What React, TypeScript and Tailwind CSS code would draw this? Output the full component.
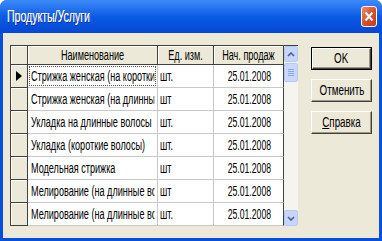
import type { ReactNode } from 'react'

const rows = [
  { name: 'Стрижка женская (на короткие волосы)', unit: 'шт.' },
  { name: 'Стрижка женская (на длинные волосы)', unit: 'шт' },
  { name: 'Укладка на длинные волосы', unit: 'шт.' },
  { name: 'Укладка (короткие волосы)', unit: 'шт.' },
  { name: 'Модельная стрижка', unit: 'шт' },
  { name: 'Мелирование (на длинные волосы)', unit: 'шт' },
  { name: 'Мелирование (на длинные воолосы)', unit: 'шт.' },
]

const font = { fontFamily: '"Liberation Sans", Arial, sans-serif' }

// the old XP dialog font is tall and narrow, so squeeze it
function L({ children }: { children: ReactNode }) {
  return <span className="inline-block origin-left scale-x-[0.65] whitespace-nowrap">{children}</span>
}
function C({ children }: { children: ReactNode }) {
  return <span className="inline-block origin-center scale-x-[0.65] whitespace-nowrap">{children}</span>
}
function R({ children }: { children: ReactNode }) {
  return <span className="inline-block origin-right scale-x-[0.62] whitespace-nowrap">{children}</span>
}

function Btn({ label, def, u }: { label: string; def?: boolean; u?: boolean }) {
  return (
    <div className={`h-[23px] w-[61px] ${def ? 'border border-black' : ''}`}>
      <div className="flex h-full w-full items-center justify-center overflow-hidden border-t border-l border-t-white border-l-white border-b border-r border-b-[#404040] border-r-[#404040] bg-[#ECE9D8] text-[14px] text-black shadow-[inset_-1px_-1px_0_#9d9a8c]">
        <span className="inline-block origin-center scale-x-[0.7] whitespace-nowrap">
          {u ? (
            <>
              <span className="underline">С</span>
              {label.slice(1)}
            </>
          ) : (
            label
          )}
        </span>
      </div>
    </div>
  )
}

export default function App() {
  return (
    <div className="flex h-[241px] w-[382px] flex-col overflow-hidden rounded-t-[7px] bg-[#0a4fdc]" style={font}>
      <div className="flex h-[33px] shrink-0 items-center justify-between bg-gradient-to-b from-[#3d8bfa] via-[#0a5be3] to-[#0547d6] pl-[7px] pr-[5px]">
        <span className="inline-block origin-left scale-x-[0.62] text-[17px] text-white [text-shadow:1px_1px_0_#0a2a8a,0.6px_0_0_white]">Продукты/Услуги</span>
        <div className="flex h-[21px] w-[16px] items-center justify-center rounded-[3px] border border-white bg-gradient-to-br from-[#e88a6c] via-[#d8512d] to-[#c23a18]">
          <svg width="10" height="11" viewBox="0 0 10 11">
            <path d="M1.5 1.5 L8.5 9.5 M8.5 1.5 L1.5 9.5" stroke="white" strokeWidth="2" />
          </svg>
        </div>
      </div>
      <div className="mx-[3px] mb-[3px] flex flex-1 gap-[13px] bg-[#ECE9D8] pl-[7px] pt-[12px]">
        <div className="flex h-[181px] w-[288px] border-t border-l border-t-[#404040] border-l-[#404040] bg-white">
          <div className="flex w-[273px] flex-col">
            <div className="flex h-[19px] border-b border-[#404040] bg-[#ECE9D8] text-[14px] text-black">
              <div className="w-[17px] border-r border-[#404040] shadow-[inset_1px_1px_0_white]" />
              <div className="flex w-[130px] items-center justify-center border-r border-[#404040] shadow-[inset_1px_1px_0_white]"><C>Наименование</C></div>
              <div className="flex w-[56px] items-center justify-center border-r border-[#404040] shadow-[inset_1px_1px_0_white]"><C>Ед. изм.</C></div>
              <div className="flex w-[70px] items-center justify-center border-r border-[#404040] shadow-[inset_1px_1px_0_white]"><C>Нач. продаж</C></div>
            </div>
            {rows.map((r, i) => (
              <div key={i} className="flex h-[23px] text-[14px] text-black">
                <div className="flex w-[17px] items-center justify-center border-r border-b border-[#404040] bg-[#ECE9D8] shadow-[inset_1px_1px_0_white]">
                  {i === 0 && (
                    <svg width="6" height="10" viewBox="0 0 6 10">
                      <path d="M0 0 L6 5 L0 10 Z" fill="black" />
                    </svg>
                  )}
                </div>
                <div className="w-[130px] overflow-hidden border-r border-b border-[#c8c8c8] p-[1px]">
                  <div className={`flex h-full items-center overflow-hidden pl-[1px] ${i === 0 ? 'border border-dotted border-[#555]' : 'border border-transparent'}`}>
                    <span className="inline-block w-[190px] shrink-0 origin-left scale-x-[0.65] overflow-hidden whitespace-nowrap">{r.name}</span>
                  </div>
                </div>
                <div className="flex w-[56px] items-center overflow-hidden border-r border-b border-[#c8c8c8] pl-[2px]"><L>{r.unit}</L></div>
                <div className="flex w-[70px] items-center justify-end border-r border-b border-[#c8c8c8] border-r-[#404040] pr-[12px]"><R>25.01.2008</R></div>
              </div>
            ))}
          </div>
          <div className="flex w-[15px] flex-col bg-[#f5f4ef]">
            <div className="flex h-[16px] items-center justify-center rounded-[2px] border border-[#b7c9f2] bg-[#c6d5fb]">
              <svg width="8" height="5" viewBox="0 0 8 5">
                <path d="M1 4 L4 1 L7 4" stroke="#4d6185" strokeWidth="1.6" fill="none" />
              </svg>
            </div>
            <div className="mt-[1px] flex h-[19px] flex-col items-center justify-center gap-[1px] rounded-[2px] border border-[#b7c9f2] bg-[#c9d8fc]">
              <div className="h-px w-[6px] bg-[#8fa8e8]" />
              <div className="h-px w-[6px] bg-[#8fa8e8]" />
              <div className="h-px w-[6px] bg-[#8fa8e8]" />
              <div className="h-px w-[6px] bg-[#8fa8e8]" />
            </div>
            <div className="flex-1" />
            <div className="flex h-[16px] items-center justify-center rounded-[2px] border border-[#b7c9f2] bg-[#c6d5fb]">
              <svg width="8" height="5" viewBox="0 0 8 5">
                <path d="M1 1 L4 4 L7 1" stroke="#4d6185" strokeWidth="1.6" fill="none" />
              </svg>
            </div>
          </div>
        </div>
        <div className="flex flex-col gap-[9px] pt-[2px]">
          <Btn label="OK" def />
          <Btn label="Отменить" />
          <Btn label="Справка" u />
        </div>
      </div>
    </div>
  )
}
